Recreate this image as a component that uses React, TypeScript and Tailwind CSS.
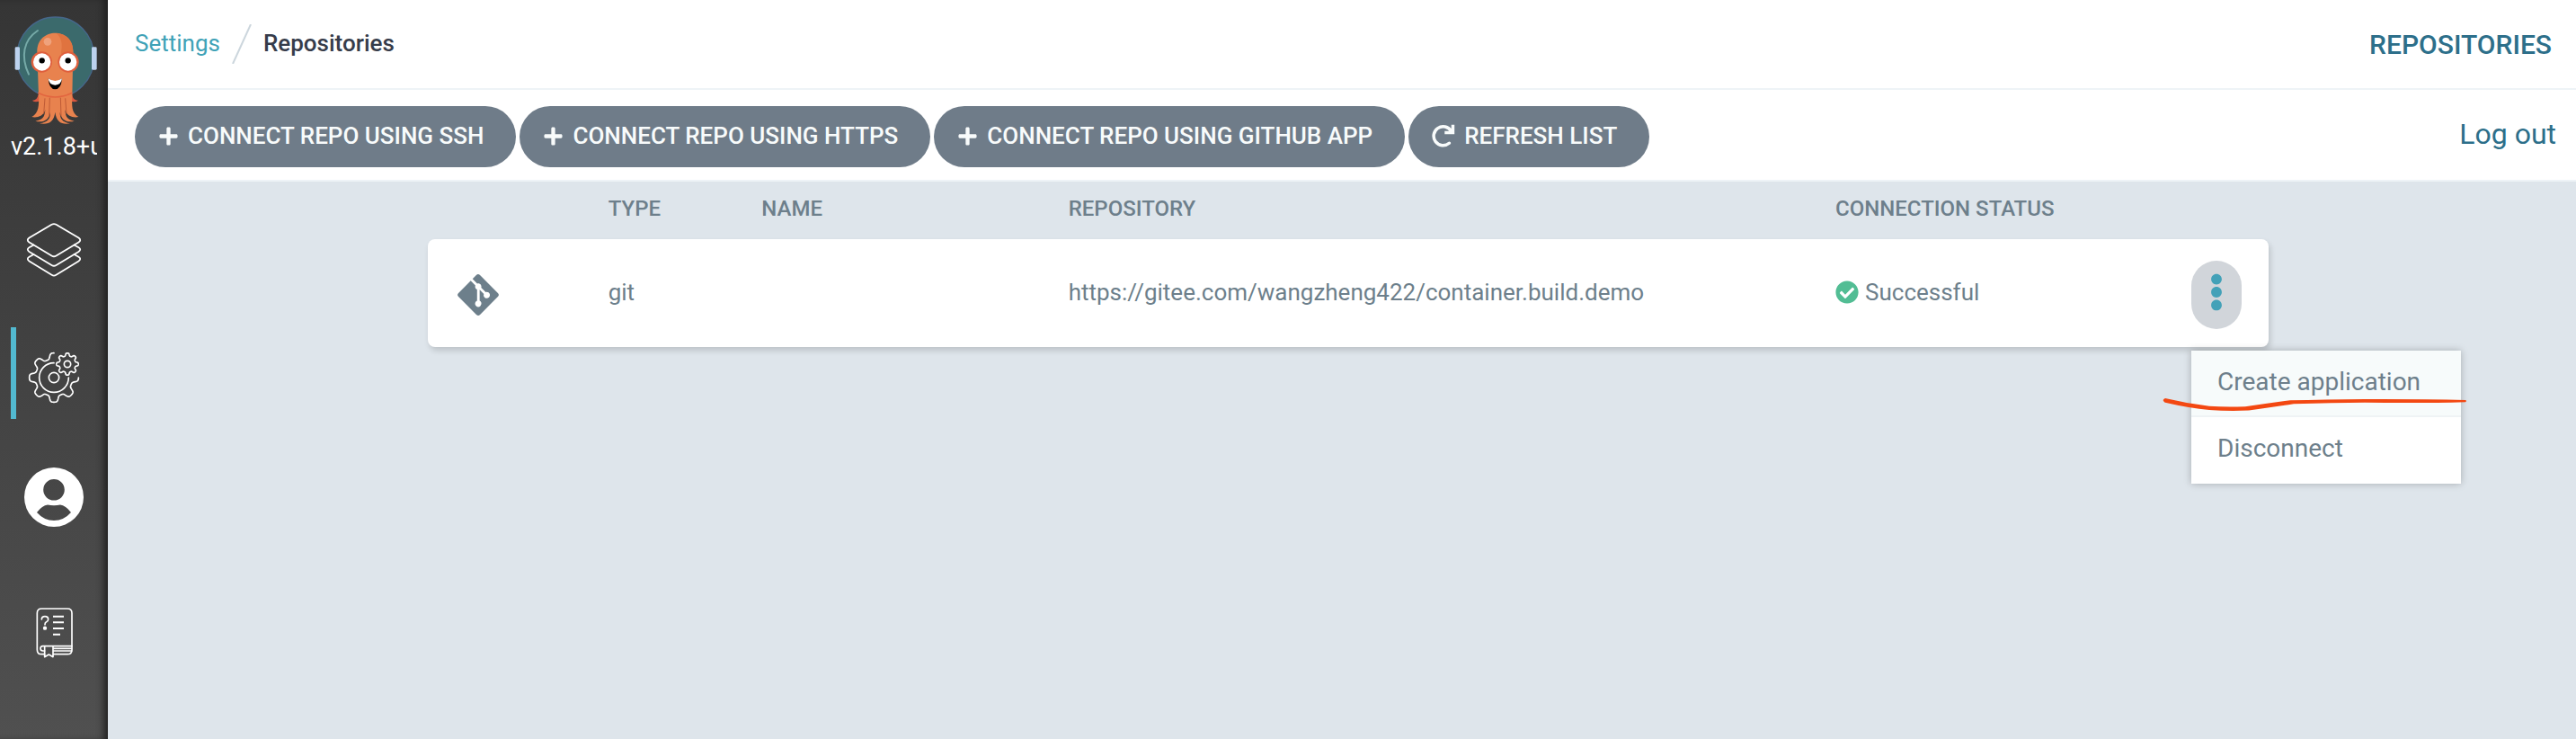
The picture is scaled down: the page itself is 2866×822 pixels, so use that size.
import type { ReactNode } from "react";
import { FaCheckCircle, FaPlus, FaEllipsisV, FaGitAlt } from "react-icons/fa";

function gearPath(
  cx: number,
  cy: number,
  radius: number,
  depth: number,
  from: number,
  to: number,
): string {
  const steps = 240;
  const points: string[] = [];
  for (let i = 0; i <= steps; i++) {
    const deg = from + ((to - from) * i) / steps;
    const a = (deg * Math.PI) / 180;
    const r = radius + (depth * Math.tanh(2 * Math.cos(8 * a))) / Math.tanh(2);
    points.push(`${(cx + r * Math.cos(a)).toFixed(2)},${(cy + r * Math.sin(a)).toFixed(2)}`);
  }
  return "M" + points.join("L");
}

function ArgoLogo() {
  return (
    <svg viewBox="48 54 279 363" className="h-[121px] w-[93px]" aria-hidden="true">
      <ellipse cx="185" cy="191" rx="129" ry="134" fill="#3b6a6c" stroke="#46678a" strokeWidth="4" />
      <path d="M126 102C78 134 68 188 96 248" fill="none" stroke="#76aaa8" strokeWidth="6" strokeLinecap="round" />
      <rect x="50" y="157" width="16" height="76" rx="4" fill="#bdd2ee" />
      <rect x="306" y="157" width="17" height="76" rx="4" fill="#bdd2ee" />
      <path d="M128 314Q124 336 107 335Q118 344 133 337ZM240 314Q244 336 261 335Q250 344 235 337Z" fill="#d9573f" />
      <path
        d="M124 172C124 90 244 90 244 172L241 320C240 352 238 376 262 390C246 394 222 388 217 366C219 392 226 400 248 404C222 410 205 400 200 374C200 398 208 406 234 412C206 416 188 408 184 374C180 408 162 416 132 412C160 406 168 398 168 374C163 400 146 410 118 404C142 400 149 392 151 366C146 388 122 394 106 390C130 376 130 352 129 320Z"
        fill="#e8824e"
      />
      <path d="M188 111C222 112 244 134 244 172V200L203 178C210 150 206 126 188 111Z" fill="#e0733f" />
      <path d="M150 328L146 380M166 326L164 388M202 326L204 388M218 328L222 380" stroke="#bf5b36" strokeWidth="3" fill="none" />
      <path d="M127 310Q184 338 241 310" fill="none" stroke="#e2653f" strokeWidth="5" />
      <circle cx="159" cy="139" r="13" fill="#efa27c" />
      <circle cx="139" cy="207" r="35" fill="#df5f3d" />
      <circle cx="228" cy="207" r="35" fill="#df5f3d" />
      <circle cx="140" cy="207" r="29" fill="#fff" />
      <circle cx="227" cy="207" r="29" fill="#fff" />
      <circle cx="140" cy="202" r="9.500" fill="#000" />
      <circle cx="227" cy="202" r="9.500" fill="#000" />
      <path d="M161 262Q184 280 207 262Q204 298 184 298Q164 298 161 262Z" fill="#000" />
      <path d="M161 262Q184 278 207 262Q204 284 184 284Q164 284 161 262Z" fill="#fff" />
    </svg>
  );
}

function LayersIcon() {
  return (
    <svg viewBox="-1 0 62 60" className="size-[62px]" fill="none" stroke="#fff" strokeWidth="1.800" strokeLinejoin="round" strokeLinecap="round" aria-hidden="true">
      <path d="M27.500 1.800Q30 .5 32.500 1.800L57.500 16.500Q61 19 57.500 21.500L32.500 36.500Q30 38 27.500 36.500L2.500 21.500Q-1 19 2.500 16.500Z" />
      <path d="M7.500 24.500L2.500 27.300Q-1 29.500 2.500 32L27.500 47Q30 48.500 32.500 47L57.500 32Q61 29.500 57.500 27.300L52.500 24.500" />
      <path d="M7.500 35L2.500 37.800Q-1 40 2.500 42.500L27.500 57.800Q30 59.300 32.500 57.800L57.500 42.500Q61 40 57.500 37.800L52.500 35" />
    </svg>
  );
}

function GearsIcon() {
  return (
    <svg viewBox="90 510 180 180" className="size-[60px]" fill="none" stroke="#fff" strokeWidth="5" strokeLinecap="round" strokeLinejoin="round" aria-hidden="true">
      <path d={gearPath(180, 600, 72, 10, -90, -360)} />
      <path d="M180 551A49 49 0 1 0 229 600" />
      <circle cx="180" cy="600" r="17" />
      <path d={gearPath(225, 555, 32, 4.5, 0, 360)} />
      <circle cx="225" cy="555" r="11" />
    </svg>
  );
}

function UserIcon() {
  return (
    <svg viewBox="0 0 66 84" className="h-[84px] w-[66px]" aria-hidden="true">
      <path
        fill="#fff"
        fillRule="evenodd"
        d="M33 0A33 33 0 1 1 33 66A33 33 0 1 1 33 0ZM33 13A11.800 11.800 0 1 0 33 36.600A11.800 11.800 0 1 0 33 13ZM14 50Q20 42 26 41.500Q33 43 40 41.500Q46 42 52 50Q44 59 33 59Q22 59 14 50Z"
      />
    </svg>
  );
}

function BookIcon() {
  return (
    <svg viewBox="118 555 126 174" className="h-[58px] w-[42px]" fill="none" stroke="#fff" strokeWidth="5" strokeLinecap="round" strokeLinejoin="round" aria-hidden="true">
      <path d="M150 713H140Q125 713 125 698V576Q125 561 140 561H226Q241 561 241 576V698Q241 713 226 713H180" />
      <path d="M241 686H144Q136 686 136 694Q136 702 144 702H150M180 702H240M180 694H240" />
      <path d="M150 688V722L164 714L178 722V688" />
      <path d="M140 597Q140 587 151 587Q162 587 162 597Q162 603 155 606Q151 608 151 614" />
      <circle cx="151" cy="626" r="4" fill="#fff" />
      <path d="M178 587H214M178 607H214M178 627H214M178 647H202" strokeWidth="6" strokeLinecap="butt" />
    </svg>
  );
}

function RefreshIcon() {
  return (
    <svg viewBox="40 50 82 82" className="size-[26px]" fill="none" stroke="currentColor" strokeWidth="11" aria-hidden="true">
      <path d="M101 117A33 33 0 1 1 108 75" strokeLinecap="round" />
      <path d="M114 52V80H85" />
      <path d="M96 78L112 62V78Z" fill="currentColor" stroke="none" />
    </svg>
  );
}

function NavLink({ label, active, children }: { label: string; active?: boolean; children: ReactNode }) {
  return (
    <a
      href="#"
      aria-label={label}
      className={`flex h-[102px] w-full items-center justify-center border-l-6 pt-[10px] pr-[26px] pl-2 ${
        active ? "border-[#52b9d0]" : "border-transparent"
      }`}
    >
      {children}
    </a>
  );
}

function Sidebar() {
  return (
    <aside className="flex w-[120px] shrink-0 flex-col bg-linear-to-b from-[#353535] to-[#505050] pt-[18px] pl-3 shadow-[inset_-8px_0_8px_-4px_#1e1e1e]">
      <div className="flex justify-center pr-2">
        <ArgoLogo />
      </div>
      <div className="mt-2 w-24 overflow-hidden text-[27px] leading-8 whitespace-nowrap text-white">v2.1.8+u</div>
      <nav className="mt-[43px] flex flex-col gap-10">
        <NavLink label="Applications">
          <LayersIcon />
        </NavLink>
        <NavLink label="Settings" active>
          <GearsIcon />
        </NavLink>
        <NavLink label="User">
          <UserIcon />
        </NavLink>
        <NavLink label="Documentation">
          <BookIcon />
        </NavLink>
      </nav>
    </aside>
  );
}

function ActionButton({ icon, children }: { icon: ReactNode; children: ReactNode }) {
  return (
    <button
      type="button"
      className="flex h-[68px] items-center gap-[10px] rounded-full bg-[#6f7c89] pr-9 pb-[2px] pl-[26px] text-[26px] font-medium whitespace-nowrap text-[#f8fbfb] uppercase"
    >
      {icon}
      {children}
    </button>
  );
}

function RowMenu() {
  return (
    <div className="absolute top-[100px] left-0 z-10 w-[300px] bg-white text-left text-[28px] text-[#6d7f8b] shadow-[0_0_8px_rgba(0,0,0,0.25)]">
      <button type="button" className="block h-[74px] w-full border-b-2 border-[#eff3f5] bg-[#f7fbfb] pb-[2px] pl-[29px] text-left">
        Create application
      </button>
      <button type="button" className="block h-[74px] w-full pb-1 pl-[29px] text-left">
        Disconnect
      </button>
      <svg viewBox="0 0 340 16" className="absolute top-[52px] -left-8 h-4 w-[340px]" aria-hidden="true">
        <path
          d="M3 1Q0 2 1 4Q2 6 4 6Q30 12 52 14Q74 15.500 96 14.500Q120 11 146 7.200Q190 6.200 225 5.800Q290 6.600 337 5.200Q339 4 337 3Q290 1.800 225 2Q180 2.600 142 3.200Q118 6.500 92 10.200Q70 11 52 9.800Q28 7 3 1Z"
          fill="#f34812"
        />
      </svg>
    </div>
  );
}

function RepoTable() {
  return (
    <table className="mx-auto block w-full max-w-[2048px] text-left text-[26px] text-[#6d7f8b]">
      <thead className="block">
        <tr className="grid h-16 grid-cols-12 items-center text-[24px] uppercase [&>th]:pb-1 [&>th]:pl-[30px] [&>th]:font-medium">
          <th aria-label="Kind" />
          <th>Type</th>
          <th className="col-span-2">Name</th>
          <th className="col-span-5">Repository</th>
          <th className="col-span-3">Connection status</th>
        </tr>
      </thead>
      <tbody className="block">
        <tr className="grid h-[120px] grid-cols-12 items-center rounded-lg bg-white pt-1 shadow-[2px_4px_6px_rgba(0,0,0,0.15)] [&>td]:pl-[30px]">
          <td>
            <FaGitAlt className="size-[52px]" />
          </td>
          <td className="pb-[6px]">git</td>
          <td className="col-span-2" />
          <td className="col-span-5 pb-[6px]">https://gitee.com/wangzheng422/container.build.demo</td>
          <td className="col-span-3 flex items-center justify-between pr-[30px]">
            <span className="flex items-center gap-[7px] pb-[6px]">
              <FaCheckCircle className="size-[26px] text-[#52bd94]" />
              Successful
            </span>
            <span className="relative">
              <button
                type="button"
                aria-label="Repository actions"
                className="flex h-[76px] w-14 items-center justify-center rounded-full bg-[#d1d5da] pb-[6px] text-[#43a1b8]"
              >
                <FaEllipsisV className="h-[42px]" />
              </button>
              <RowMenu />
            </span>
          </td>
        </tr>
      </tbody>
    </table>
  );
}

export default function App() {
  return (
    <div className="flex min-h-screen bg-[#dee5eb] font-['Roboto',sans-serif]">
      <Sidebar />
      <main className="min-w-0 flex-1">
        <header className="flex h-[100px] items-center justify-between border-b-2 border-[#eef3f7] bg-white pr-[27px] pl-[30px]">
          <nav aria-label="Breadcrumb" className="flex items-center text-[26px]">
            <a href="#" className="pb-[2px] text-[#3fa2b7]">
              Settings
            </a>
            <svg viewBox="0 0 22 44" className="mx-[13px] h-11 w-[22px]" aria-hidden="true">
              <path d="M21 0L1 44" stroke="#ccd6dd" strokeWidth="2" />
            </svg>
            <span className="pb-[2px] font-medium text-[#363c4a]">Repositories</span>
          </nav>
          <h1 className="text-[30px] font-medium text-[#2d6f8a] uppercase">Repositories</h1>
        </header>
        <div className="flex h-[102px] items-center justify-between border-b-2 border-[#eef3f7] bg-white pr-[22px] pl-[30px]">
          <div className="flex gap-1 pt-1">
            <ActionButton icon={<FaPlus className="size-[23px]" />}>Connect repo using SSH</ActionButton>
            <ActionButton icon={<FaPlus className="size-[23px]" />}>Connect repo using HTTPS</ActionButton>
            <ActionButton icon={<FaPlus className="size-[23px]" />}>Connect repo using GitHub App</ActionButton>
            <ActionButton icon={<RefreshIcon />}>Refresh list</ActionButton>
          </div>
          <a href="#" className="pb-[2px] text-[32px] text-[#2d6f8a]">
            Log out
          </a>
        </div>
        <div className="pl-[14px]">
          <RepoTable />
        </div>
      </main>
    </div>
  );
}
